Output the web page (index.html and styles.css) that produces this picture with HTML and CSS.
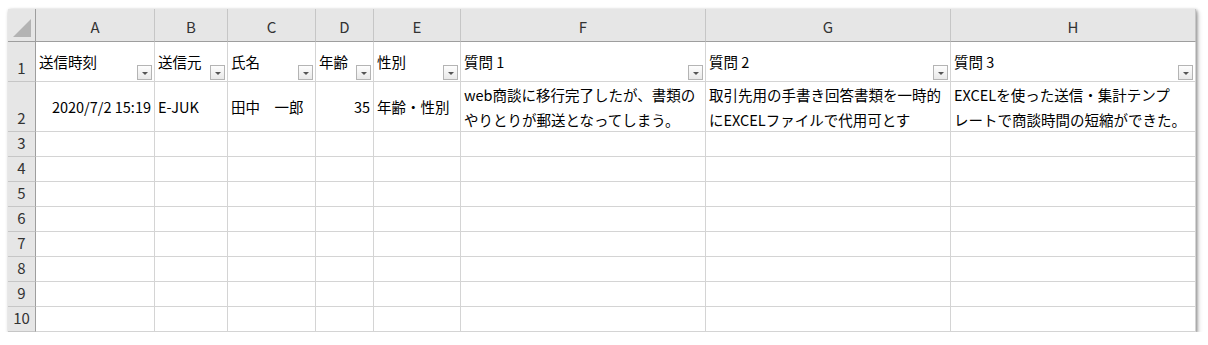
FILE: index.html
```html
<!DOCTYPE html>
<html lang="ja">
<head>
  <meta charset="UTF-8">
  <title>回答一覧</title>
  <link rel="stylesheet" href="styles.css">
</head>
<body>
  <div class="sheet">
    <!-- 列見出し -->
    <div class="corner"><span class="tri"></span></div>
    <div class="colhead">A</div>
    <div class="colhead">B</div>
    <div class="colhead">C</div>
    <div class="colhead">D</div>
    <div class="colhead">E</div>
    <div class="colhead">F</div>
    <div class="colhead">G</div>
    <div class="colhead">H</div>

    <!-- 1行目: 見出し -->
    <div class="rowhead">1</div>
    <div class="cell filter">送信時刻<span class="btn"></span></div>
    <div class="cell filter">送信元<span class="btn"></span></div>
    <div class="cell filter">氏名<span class="btn"></span></div>
    <div class="cell filter">年齢<span class="btn"></span></div>
    <div class="cell filter">性別<span class="btn"></span></div>
    <div class="cell filter">質問 1<span class="btn"></span></div>
    <div class="cell filter">質問 2<span class="btn"></span></div>
    <div class="cell filter">質問 3<span class="btn"></span></div>

    <!-- 2行目: データ -->
    <div class="rowhead">2</div>
    <div class="cell num">2020/7/2 15:19</div>
    <div class="cell">E-JUK</div>
    <div class="cell">田中　一郎</div>
    <div class="cell num">35</div>
    <div class="cell">年齢・性別</div>
    <div class="cell wrap">web商談に移行完了したが、書類の<br>やりとりが郵送となってしまう。</div>
    <div class="cell wrap">取引先用の手書き回答書類を一時的<br>にEXCELファイルで代用可とす</div>
    <div class="cell wrap">EXCELを使った送信・集計テンプ<br>レートで商談時間の短縮ができた。</div>
  </div>

  <script>
    // 空の行 3〜10
    const sheet = document.querySelector(".sheet");
    for (let r = 3; r <= 10; r++) {
      const head = document.createElement("div");
      head.className = "rowhead";
      head.textContent = r;
      sheet.appendChild(head);
      for (let c = 0; c < 8; c++) {
        const cell = document.createElement("div");
        cell.className = "cell";
        sheet.appendChild(cell);
      }
    }
  </script>
</body>
</html>
```

FILE: styles.css
```css
body {
  margin: 0;
  background: #fff;
  font-family: "Noto Sans CJK JP", "Noto Sans", sans-serif;
}
.sheet {
  display: grid;
  grid-template-columns: 28px 119px 73px 88px 58px 87px 245px 245px 245px;
  grid-template-rows: 33px 40px 50px repeat(8, 25px);
  width: 1188px;
  margin: 9px 0 0 8px;
  background: #fff;
  box-shadow: 1px 1px 3px rgba(0, 0, 0, 0.35), 2px 3px 5px rgba(0, 0, 0, 0.2);
  color: #000;
  font-size: 14.5px;
}
.corner,
.colhead,
.rowhead {
  background: #e6e6e6;
  color: #333;
  box-sizing: border-box;
}
.corner {
  position: relative;
  border-right: 1px solid #9e9e9e;
  border-bottom: 1px solid #9e9e9e;
}
.corner .tri {
  position: absolute;
  right: 4px;
  bottom: 4px;
  width: 0;
  height: 0;
  border-left: 18px solid transparent;
  border-bottom: 18px solid #b3b3b3;
}
.colhead {
  display: flex;
  align-items: center;
  justify-content: center;
  padding-top: 3px;
  font-size: 15px;
  border-right: 1px solid #c6c6c6;
  border-bottom: 1px solid #9e9e9e;
}
.rowhead {
  display: flex;
  align-items: flex-end;
  justify-content: center;
  padding-bottom: 1px;
  font-size: 15px;
  line-height: 24px;
  border-right: 1px solid #9e9e9e;
  border-bottom: 1px solid #c6c6c6;
}
.cell {
  position: relative;
  display: flex;
  align-items: center;
  padding: 0 2px 0 3px;
  box-sizing: border-box;
  border-right: 1px solid #d4d4d4;
  border-bottom: 1px solid #d4d4d4;
  white-space: nowrap;
  overflow: hidden;
  line-height: 24px;
}
.cell.num {
  justify-content: flex-end;
  padding-right: 3px;
}
.cell.filter {
  align-items: flex-start;
  padding-top: 8px;
}
.cell.wrap {
  align-items: flex-start;
  line-height: 25px;
  padding-top: 0;
}
.btn {
  position: absolute;
  right: 2px;
  bottom: 1px;
  width: 15px;
  height: 15px;
  box-sizing: border-box;
  border: 1px solid #b4b4b4;
  background: linear-gradient(#fdfdfd, #e9e9e9);
}
.btn::after {
  content: "";
  position: absolute;
  left: 4px;
  top: 6px;
  border-left: 3px solid transparent;
  border-right: 3px solid transparent;
  border-top: 3px solid #555;
}
```
